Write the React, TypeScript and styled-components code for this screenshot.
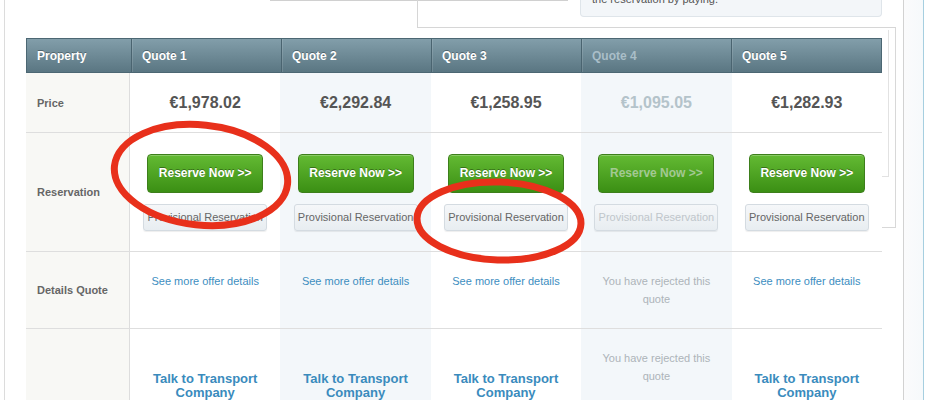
import React from "react";
import styled, { createGlobalStyle } from "styled-components";

const GlobalStyle = createGlobalStyle`
  html, body { margin: 0; padding: 0; background: #ffffff; overflow: hidden; }
  body { font-family: "Liberation Sans", Arial, Helvetica, sans-serif; }
  * { box-sizing: border-box; }
`;

const Page = styled.div`
  position: relative;
  display: flex;
  width: 931px;
  height: 400px;
  overflow: hidden;
  background: #fff;
`;

const LeftGutter = styled.div`
  width: 4px;
  flex: none;
`;

const Frame = styled.div`
  width: 900px;
  flex: none;
  border-left: 1px solid #dcdcdc;
  border-right: 1px solid #d2d2d2;
`;

const SideStrip = styled.div`
  width: 20px;
  flex: none;
  background: linear-gradient(90deg, #fbfbfc, #f6f9fb);
  border-right: 1px solid #a6cfe0;
`;

const TopStrip = styled.div`
  display: grid;
  height: 28px;
`;

const FadeLine = styled.div`
  grid-area: 1 / 1;
  margin-left: 265px;
  width: 298px;
  height: 0;
  border-top: 1px solid #d0d0d0;
`;

const TopPanel = styled.div`
  grid-area: 1 / 1;
  margin-left: 412px;
  width: 479px;
  height: 28px;
  border-left: 1px solid #d6d6d6;
  border-bottom: 1px solid #d6d6d6;
`;

const InfoBox = styled.div`
  margin-left: 162px;
  width: 302px;
  height: 17px;
  display: flex;
  align-items: flex-end;
  justify-content: flex-start;
  padding: 0 0 10px 11px;
  background: #f3f6f9;
  border: 1px solid #dfe5ea;
  border-top: none;
  border-radius: 0 0 4px 4px;
  font-size: 11px;
  line-height: 14px;
  color: #555;
  white-space: nowrap;
`;

const TableArea = styled.div`
  display: grid;
`;

const OuterFrameLine = styled.div`
  grid-area: 1 / 1;
  margin-left: 875px;
  width: 16px;
  height: 200px;
  border-right: 1px solid #d8d8d8;
  border-bottom: 1px solid #d8d8d8;
`;

const InnerFrameLine = styled.div`
  grid-area: 1 / 1;
  margin-left: 877px;
  margin-top: 2px;
  width: 7px;
  height: 147px;
  border-right: 1px solid #e2e2e2;
  border-bottom: 1px solid #e2e2e2;
`;

const Table = styled.div`
  grid-area: 1 / 1;
  margin-left: 21px;
  margin-top: 10px;
  width: 856px;
  align-self: start;
`;

const columns = `104px repeat(5, 1fr)`;

const HeaderRow = styled.div`
  display: grid;
  grid-template-columns: ${columns};
  height: 35px;
  background: linear-gradient(#829eaa, #5a7682);
  border: 1px solid #4c6773;
`;

const HeaderCell = styled.div<{ $muted?: boolean; $first?: boolean }>`
  display: flex;
  align-items: center;
  padding-left: 10px;
  font-size: 12px;
  font-weight: bold;
  color: ${(p) => (p.$muted ? "#a9bec8" : "#ffffff")};
  text-shadow: ${(p) => (p.$muted ? "none" : "0 -1px 0 rgba(0, 0, 0, 0.3)")};
  border-left: ${(p) => (p.$first ? "none" : "1px solid #4a6470")};
  box-shadow: ${(p) => (p.$first ? "none" : "inset 1px 0 0 rgba(255,255,255,0.12)")};
`;

const Row = styled.div<{ $h: number }>`
  display: grid;
  grid-template-columns: ${columns};
  height: ${(p) => p.$h}px;
  border-bottom: 1px solid #dedede;
`;

type Tint = "prop" | "alt" | "plain";

const Cell = styled.div<{ $tint: Tint; $align?: "center" | "top" }>`
  display: flex;
  flex-direction: column;
  align-items: center;
  justify-content: ${(p) => (p.$align === "top" ? "flex-start" : "center")};
  padding-top: ${(p) => (p.$align === "top" ? "20px" : "0")};
  text-align: center;
  background: ${(p) =>
    p.$tint === "prop" ? "#f8f8f5" : p.$tint === "alt" ? "#f3f7fa" : "#ffffff"};
`;

const LabelCell = styled.div`
  display: flex;
  align-items: center;
  padding-left: 11px;
  background: #f8f8f5;
  border-right: 1px solid #dddddd;
  font-size: 11px;
  font-weight: bold;
  color: #666;
`;

const Price = styled.div<{ $muted?: boolean }>`
  font-size: 16px;
  font-weight: bold;
  color: ${(p) => (p.$muted ? "#b4c3ca" : "#555555")};
`;

const ReserveButton = styled.button<{ $muted?: boolean }>`
  width: 116px;
  height: 39px;
  margin: 0;
  padding: 0;
  border: 1px solid #3d7f1b;
  border-radius: 4px;
  background: linear-gradient(#63ba33, #3b8f14);
  box-shadow: inset 0 1px 0 rgba(255, 255, 255, 0.25);
  font-family: "Liberation Sans", Arial, sans-serif;
  font-size: 12px;
  font-weight: bold;
  color: ${(p) => (p.$muted ? "#a3c993" : "#ffffff")};
  text-shadow: ${(p) => (p.$muted ? "none" : "0 -1px 0 rgba(0, 0, 0, 0.35)")};
`;

const ProvisionalButton = styled.button<{ $muted?: boolean }>`
  width: 124px;
  height: 27px;
  margin: 11px 0 0;
  padding: 0;
  border: 1px solid #d4dbe1;
  border-radius: 3px;
  background: linear-gradient(#f5f7f9, #e8edf1);
  box-shadow: 0 1px 1px rgba(0, 0, 0, 0.07);
  font-family: "Liberation Sans", Arial, sans-serif;
  font-size: 11px;
  color: ${(p) => (p.$muted ? "#c0c6cb" : "#666666")};
`;

const OfferLink = styled.a`
  font-size: 11px;
  line-height: 18px;
  color: #3d8ebf;
  text-decoration: none;
`;

const Rejected = styled.div`
  width: 120px;
  font-size: 11px;
  line-height: 18px;
  color: #adb4b9;
`;

const TalkLink = styled.a`
  margin-top: 23px;
  font-size: 13px;
  line-height: 14px;
  font-weight: bold;
  color: #3a8bbd;
  text-decoration: none;
`;

const Overlay = styled.svg`
  position: absolute;
  left: 0;
  top: 0;
  pointer-events: none;
`;

type Quote = { name: string; price: string; rejected?: boolean };

const quotes: Quote[] = [
  { name: "Quote 1", price: "€1,978.02" },
  { name: "Quote 2", price: "€2,292.84" },
  { name: "Quote 3", price: "€1,258.95" },
  { name: "Quote 4", price: "€1,095.05", rejected: true },
  { name: "Quote 5", price: "€1,282.93" },
];

const tintFor = (i: number): Tint => (i % 2 === 1 ? "alt" : "plain");

export default function App() {
  return (
    <>
      <GlobalStyle />
      <Page>
        <LeftGutter />
        <Frame>
          <TopStrip>
            <FadeLine />
            <TopPanel>
              <InfoBox>the reservation by paying.</InfoBox>
            </TopPanel>
          </TopStrip>
          <TableArea>
            <OuterFrameLine />
            <InnerFrameLine />
            <Table>
              <HeaderRow>
                <HeaderCell $first>Property</HeaderCell>
                {quotes.map((q) => (
                  <HeaderCell key={q.name} $muted={q.rejected}>
                    {q.name}
                  </HeaderCell>
                ))}
              </HeaderRow>

              <Row $h={60}>
                <LabelCell>Price</LabelCell>
                {quotes.map((q, i) => (
                  <Cell key={q.name} $tint={tintFor(i)}>
                    <Price $muted={q.rejected}>{q.price}</Price>
                  </Cell>
                ))}
              </Row>

              <Row $h={119}>
                <LabelCell>Reservation</LabelCell>
                {quotes.map((q, i) => (
                  <Cell key={q.name} $tint={tintFor(i)}>
                    <ReserveButton $muted={q.rejected}>Reserve Now &gt;&gt;</ReserveButton>
                    <ProvisionalButton $muted={q.rejected}>Provisional Reservation</ProvisionalButton>
                  </Cell>
                ))}
              </Row>

              <Row $h={77}>
                <LabelCell>Details Quote</LabelCell>
                {quotes.map((q, i) => (
                  <Cell key={q.name} $tint={tintFor(i)} $align="top">
                    {q.rejected ? (
                      <Rejected>You have rejected this quote</Rejected>
                    ) : (
                      <OfferLink href="#">See more offer details</OfferLink>
                    )}
                  </Cell>
                ))}
              </Row>

              <Row $h={120}>
                <LabelCell />
                {quotes.map((q, i) => (
                  <Cell key={q.name} $tint={tintFor(i)} $align="top">
                    {q.rejected ? (
                      <Rejected>You have rejected this quote</Rejected>
                    ) : (
                      <TalkLink href="#">
                        Talk to Transport
                        <br />
                        Company
                      </TalkLink>
                    )}
                  </Cell>
                ))}
              </Row>
            </Table>
          </TableArea>
        </Frame>
        <SideStrip />
        <Overlay width="931" height="400" viewBox="0 0 931 400">
          <ellipse
            cx="201"
            cy="175"
            rx="87"
            ry="50"
            transform="rotate(6 201 175)"
            fill="none"
            stroke="#e8301b"
            strokeWidth="7"
          />
          <ellipse
            cx="499"
            cy="221"
            rx="82"
            ry="39"
            transform="rotate(2 499 221)"
            fill="none"
            stroke="#e8301b"
            strokeWidth="7"
          />
        </Overlay>
      </Page>
    </>
  );
}
